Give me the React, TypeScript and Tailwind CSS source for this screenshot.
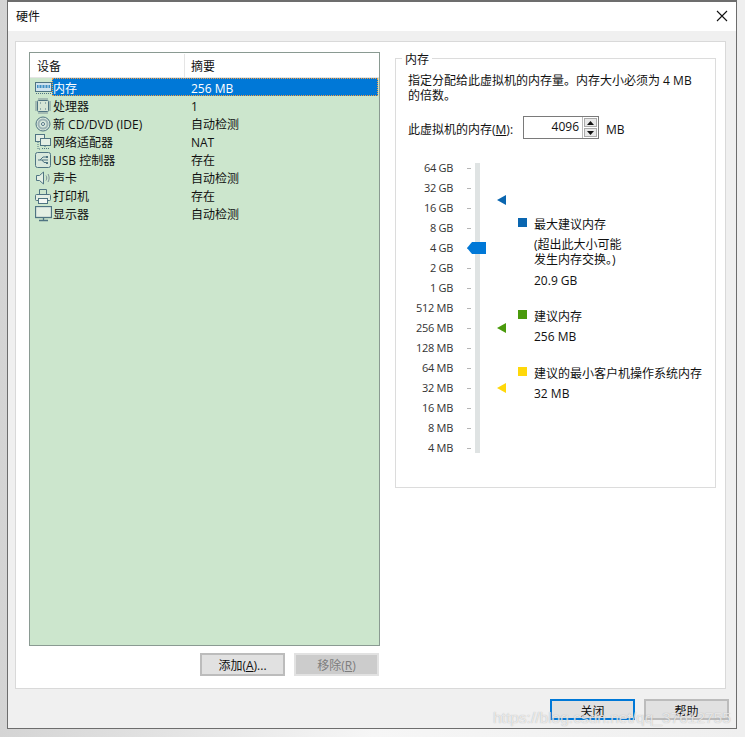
const C = "#4f7482";

function MemIcon() {
  return (
    <svg width="17" height="14" viewBox="0 0 17 14" fill="none">
      <rect x="0.5" y="1.5" width="16" height="9" fill="#cfe3ee" stroke={C} />
      <rect x="2" y="4" width="13" height="3" fill="#3f8fc4" />
      <path d="M4 4v3M7 4v3M10 4v3M13 4v3" stroke="#cfe3ee" />
      <path d="M1 12.5h15" stroke={C} strokeDasharray="1 1" />
    </svg>
  );
}
function CpuIcon() {
  return (
    <svg width="16" height="16" viewBox="0 0 16 16" fill="none">
      <rect x="2.5" y="2.5" width="11" height="11" rx="1" fill="#d6e6d6" stroke={C} />
      <path d="M4 0v2M6 0v2M8 0v2M10 0v2M12 0v2M4 14v2M6 14v2M8 14v2M10 14v2M12 14v2M0 4h2M0 6h2M0 8h2M0 10h2M0 12h2M14 4h2M14 6h2M14 8h2M14 10h2M14 12h2" stroke="#7d9199" />
      <path d="M5 5h1M10 5h1M5 11h1M10 11h1" stroke={C} />
    </svg>
  );
}
function CdIcon() {
  return (
    <svg width="16" height="16" viewBox="0 0 16 16" fill="none">
      <circle cx="8" cy="8" r="7" fill="#d8e8dc" stroke={C} />
      <circle cx="8" cy="8" r="4.5" stroke="#9db3b6" strokeWidth="2" />
      <circle cx="8" cy="8" r="1.5" fill="#fff" stroke={C} />
    </svg>
  );
}
function NetIcon() {
  return (
    <svg width="16" height="16" viewBox="0 0 16 16" fill="none">
      <rect x="0.5" y="0.5" width="9" height="7" fill="#e4efe4" stroke={C} />
      <rect x="5.5" y="4.5" width="10" height="7" fill="#e4efe4" stroke={C} />
      <path d="M10 12v2M7 14.5h7M3 8v7h3" stroke={C} strokeDasharray="1 1" />
    </svg>
  );
}
function UsbIcon() {
  return (
    <svg width="16" height="16" viewBox="0 0 16 16" fill="none">
      <rect x="0.5" y="0.5" width="15" height="15" rx="2" fill="#d8e8dc" stroke={C} />
      <path d="M3 8h10M5 8l3-3h3M7 8l2 2.5h2" stroke={C} />
      <rect x="11" y="4" width="2" height="2" fill={C} />
      <rect x="11" y="10" width="2" height="2" fill={C} />
    </svg>
  );
}
function SoundIcon() {
  return (
    <svg width="16" height="14" viewBox="0 0 16 14" fill="none">
      <path d="M1.5 4.5h3l4-3.5v12l-4-3.500h-3z" fill="#e4efe4" stroke={C} />
      <path d="M11 4.500c1 1.500 1 3.500 0 5M13 3c1.500 2.500 1.500 5.500 0 8" stroke="#7d9199" />
    </svg>
  );
}
function PrinterIcon() {
  return (
    <svg width="16" height="15" viewBox="0 0 16 15" fill="none">
      <path d="M4.500 5V.5h7V5" stroke={C} />
      <rect x="0.500" y="5.500" width="15" height="6" rx="1" fill="#e4efe4" stroke={C} />
      <rect x="3.500" y="9.500" width="9" height="5" fill="#f4f8f4" stroke={C} />
    </svg>
  );
}
function MonitorIcon() {
  return (
    <svg width="17" height="16" viewBox="0 0 17 16" fill="none">
      <rect x="0.500" y="0.500" width="16" height="11" fill="#e4efe4" stroke={C} strokeWidth="1.300" />
      <path d="M8.500 12v2M4 14.500h9" stroke={C} strokeWidth="1.300" />
    </svg>
  );
}

const rows = [
  { icon: <MemIcon />, name: "内存", sum: "256 MB", sel: true },
  { icon: <CpuIcon />, name: "处理器", sum: "1" },
  { icon: <CdIcon />, name: "新 CD/DVD (IDE)", sum: "自动检测" },
  { icon: <NetIcon />, name: "网络适配器", sum: "NAT" },
  { icon: <UsbIcon />, name: "USB 控制器", sum: "存在" },
  { icon: <SoundIcon />, name: "声卡", sum: "自动检测" },
  { icon: <PrinterIcon />, name: "打印机", sum: "存在" },
  { icon: <MonitorIcon />, name: "显示器", sum: "自动检测" },
];

const scale = ["64 GB", "32 GB", "16 GB", "8 GB", "4 GB", "2 GB", "1 GB", "512 MB", "256 MB", "128 MB", "64 MB", "32 MB", "16 MB", "8 MB", "4 MB"];

function Tri({ color, cls }: { color: string; cls: string }) {
  return (
    <svg width="9" height="10" viewBox="0 0 9 10" className={cls}>
      <path d="M0 5L9 0v10z" fill={color} />
    </svg>
  );
}

export default function App() {
  return (
    <div
      className="relative w-[745px] h-[737px] overflow-hidden bg-gradient-to-r from-[#d4d4d4] via-[#f6f6f6] to-[#efefef] text-[12px] leading-[16px] text-[#111]"
      style={{ fontFamily: '"Open Sans", "Noto Sans CJK SC", sans-serif' }}
    >
      <div className="ml-[7px] w-[730px] h-[729px] flex flex-col border border-t-2 border-[#6d6d6d] bg-[#f0f0f0]">
        {/* title bar */}
        <div className="h-[29px] bg-white flex items-center justify-between pl-[8px] pr-[8px] shrink-0">
          <span>硬件</span>
          <svg width="12" height="12" viewBox="0 0 12 12" fill="none" className="mb-[2px]">
            <path d="M1 1l10 10M11 1L1 11" stroke="#111" strokeWidth="1.100" />
          </svg>
        </div>

        {/* content panel */}
        <div className="ml-[7px] mt-[10px] w-[711px] h-[648px] shrink-0 bg-white border border-[#d9d9d9] flex pl-[13px] pt-[10px]">
          {/* left */}
          <div className="w-[351px] shrink-0 flex flex-col">
            <div className="w-[351px] h-[594px] border border-[#8a9a92] bg-[#cce6cd] flex flex-col">
              <div className="h-[25px] bg-white flex items-center shrink-0 border-b border-[#e5e5e5] pt-[1px]">
                <div className="w-[155px] pl-[7px] pt-[3px] border-r border-[#e5e5e5] h-full flex items-center">设备</div>
                <div className="pl-[6px] pt-[3px]">摘要</div>
              </div>
              {rows.map((r) => (
                <div key={r.name} className="h-[18px] flex items-center shrink-0">
                  <div className="w-[22px] shrink-0 flex justify-center pl-[4px] pt-[2px]">{r.icon}</div>
                  <div
                    className={
                      r.sel
                        ? "flex-1 mr-[1px] h-[18px] flex items-center bg-[#0078d7] text-white border border-dotted border-[#f59e42] pt-[3px]"
                        : "flex-1 h-[18px] flex items-center pt-[4px]"
                    }
                  >
                    <span className={r.sel ? "w-[138px] shrink-0" : "w-[139px] shrink-0 pl-[1px]"}>{r.name}</span>
                    <span>{r.sum}</span>
                  </div>
                </div>
              ))}
            </div>
            <div className="flex justify-end gap-[9px] mt-[7px] pr-[1px]">
              <div className="w-[85px] h-[23px] bg-[#e1e1e1] border-2 border-[#bcbcbc] flex items-center justify-center pt-[3px]">
                <span>添加(<span className="underline">A</span>)...</span>
              </div>
              <div className="w-[85px] h-[23px] bg-[#cccccc] border-2 border-[#e2e2e2] flex items-center justify-center text-[#7d7d7d] pt-[3px]">
                <span>移除(<span className="underline">R</span>)</span>
              </div>
            </div>
          </div>

          {/* right group */}
          <div className="relative ml-[15px] mt-[6px] w-[321px] h-[430px] border border-[#dcdcdc] pl-[12px]">
            <div className="absolute left-[6px] top-[-7px] bg-white px-[3px]">内存</div>
            <p className="mt-[14px] w-[292px] leading-[15px]">
              指定分配给此虚拟机的内存量。内存大小必须为 4 MB 的倍数。
            </p>
            <div className="flex items-center mt-[13px] h-[23px]">
              <span className="w-[115px] shrink-0 pt-[4px]">此虚拟机的内存(<span className="underline">M</span>):</span>
              <div className="w-[76px] h-[23px] border border-[#7a7a7a] flex items-stretch bg-white">
                <span className="flex-1 text-right pr-[3px] pt-[2px]">4096</span>
                <div className="w-[16px] flex flex-col gap-[1px] p-[1px] border-l border-[#bbb]">
                  <div className="flex-1 bg-[#e8e8e8] border border-[#aaa] flex items-center justify-center">
                    <svg width="7" height="4" viewBox="0 0 7 4"><path d="M3.500 0L7 4H0z" fill="#111" /></svg>
                  </div>
                  <div className="flex-1 bg-[#e8e8e8] border border-[#aaa] flex items-center justify-center">
                    <svg width="7" height="4" viewBox="0 0 7 4"><path d="M3.500 4L7 0H0z" fill="#111" /></svg>
                  </div>
                </div>
              </div>
              <span className="ml-[7px] pt-[4px]">MB</span>
            </div>

            {/* slider area */}
            <div className="relative flex mt-[24px] h-[290px]">
              <div className="w-[45px] shrink-0 flex flex-col text-right text-[#333] text-[11px] tracking-[-0.3px] -mt-[1px]">
                {scale.map((s) => (
                  <div key={s} className="h-[20px] shrink-0 leading-[12px] whitespace-nowrap">{s}</div>
                ))}
              </div>
              <div className="w-[5px] shrink-0 ml-[14px] flex flex-col">
                {scale.map((s) => (
                  <div key={s} className="h-[20px] shrink-0 pt-[5px]">
                    <div className="w-[4px] h-[1px] bg-[#b5b5b5]" />
                  </div>
                ))}
              </div>
              <div className="w-[5px] h-[290px] shrink-0 ml-[3px] bg-[#dfe3e3]" />
              <div className="w-[9px] shrink-0 ml-[17px] flex flex-col">
                <Tri color="#0a66b0" cls="mt-[32px]" />
                <Tri color="#4a9a0c" cls="mt-[118px]" />
                <Tri color="#ffd80a" cls="mt-[50px]" />
              </div>
              <div className="ml-[12px] w-[190px] shrink-0">
                <div className="flex items-start mt-[54px]">
                  <div className="w-[9px] h-[9px] bg-[#0a66b0] mt-[1px] shrink-0" />
                  <div className="ml-[7px]">
                    <div className="whitespace-nowrap">最大建议内存</div>
                    <div className="mt-[4px] leading-[15px] whitespace-nowrap">(超出此大小可能<br />发生内存交换。)</div>
                    <div className="mt-[6px]">20.9 GB</div>
                  </div>
                </div>
                <div className="flex items-start mt-[19px]">
                  <div className="w-[9px] h-[9px] bg-[#4a9a0c] mt-[2px] shrink-0" />
                  <div className="ml-[7px]">
                    <div className="pt-[1px]">建议内存</div>
                    <div className="mt-[4px]">256 MB</div>
                  </div>
                </div>
                <div className="flex items-start mt-[21px]">
                  <div className="w-[9px] h-[9px] bg-[#ffd80a] mt-[1px] shrink-0" />
                  <div className="ml-[7px]">
                    <div className="whitespace-nowrap">建议的最小客户机操作系统内存</div>
                    <div className="mt-[4px]">32 MB</div>
                  </div>
                </div>
              </div>
              {/* thumb */}
              <svg width="19" height="12" viewBox="0 0 19 12" className="absolute left-[59px] top-[79px]">
                <path d="M0 6L5 0h14v12H5z" fill="#0078d7" />
              </svg>
            </div>
          </div>
        </div>

        {/* footer */}
        <div className="flex justify-end gap-[9px] mt-[10px] mr-[7px]">
          <div className="w-[85px] h-[21px] bg-[#e1e1e1] border-2 border-[#0078d7] flex items-center justify-center pt-[4px]">关闭</div>
          <div className="w-[85px] h-[21px] bg-[#e1e1e1] border-2 border-[#bcbcbc] flex items-center justify-center pt-[4px]">帮助</div>
        </div>
      </div>
      {/* watermark */}
      <div
        className="absolute left-[493px] top-[710px] text-[15.500px] text-white/70 whitespace-nowrap [text-shadow:0_0_1px_rgba(120,120,120,0.6)]"
        style={{ fontFamily: '"Liberation Sans", sans-serif' }}
      >
        https://blog.csdn.net/qq_37612755
      </div>
    </div>
  );
}
